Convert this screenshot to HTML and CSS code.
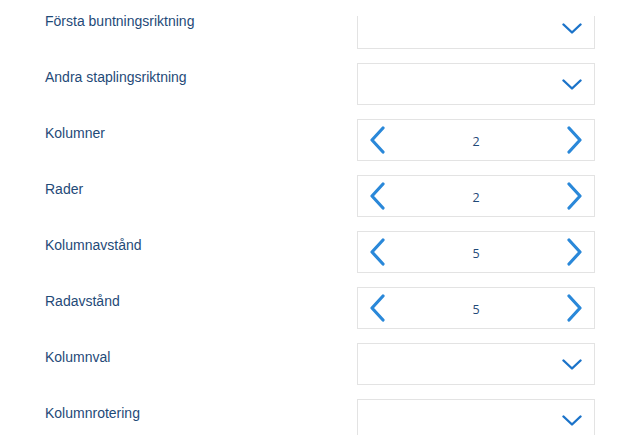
FILE: index.html
```html
<!DOCTYPE html>
<html lang="sv">
<head>
<meta charset="utf-8">
<link rel="stylesheet" href="styles.css">
</head>
<body>
<div class="form">
  <div class="row first">
    <div class="label">Första buntningsriktning</div>
    <div class="box select"><svg class="down" width="20" height="12" viewBox="0 0 20 12"><path d="M1.5 1.5 L10 9.5 L18.5 1.5" /></svg></div>
  </div>
  <div class="row">
    <div class="label">Andra staplingsriktning</div>
    <div class="box select"><svg class="down" width="20" height="12" viewBox="0 0 20 12"><path d="M1.5 1.5 L10 9.5 L18.5 1.5" /></svg></div>
  </div>
  <div class="row">
    <div class="label">Kolumner</div>
    <div class="box stepper">
      <svg class="nav" width="17" height="28" viewBox="0 0 17 28"><path d="M14 2 L3 14 L14 26" /></svg>
      <span class="val">2</span>
      <svg class="nav" width="17" height="28" viewBox="0 0 17 28"><path d="M3 2 L14 14 L3 26" /></svg>
    </div>
  </div>
  <div class="row">
    <div class="label">Rader</div>
    <div class="box stepper">
      <svg class="nav" width="17" height="28" viewBox="0 0 17 28"><path d="M14 2 L3 14 L14 26" /></svg>
      <span class="val">2</span>
      <svg class="nav" width="17" height="28" viewBox="0 0 17 28"><path d="M3 2 L14 14 L3 26" /></svg>
    </div>
  </div>
  <div class="row">
    <div class="label">Kolumnavstånd</div>
    <div class="box stepper">
      <svg class="nav" width="17" height="28" viewBox="0 0 17 28"><path d="M14 2 L3 14 L14 26" /></svg>
      <span class="val">5</span>
      <svg class="nav" width="17" height="28" viewBox="0 0 17 28"><path d="M3 2 L14 14 L3 26" /></svg>
    </div>
  </div>
  <div class="row">
    <div class="label">Radavstånd</div>
    <div class="box stepper">
      <svg class="nav" width="17" height="28" viewBox="0 0 17 28"><path d="M14 2 L3 14 L14 26" /></svg>
      <span class="val">5</span>
      <svg class="nav" width="17" height="28" viewBox="0 0 17 28"><path d="M3 2 L14 14 L3 26" /></svg>
    </div>
  </div>
  <div class="row">
    <div class="label">Kolumnval</div>
    <div class="box select"><svg class="down" width="20" height="12" viewBox="0 0 20 12"><path d="M1.5 1.5 L10 9.5 L18.5 1.5" /></svg></div>
  </div>
  <div class="row">
    <div class="label">Kolumnrotering</div>
    <div class="box select"><svg class="down" width="20" height="12" viewBox="0 0 20 12"><path d="M1.5 1.5 L10 9.5 L18.5 1.5" /></svg></div>
  </div>
</div>
</body>
</html>
```
FILE: styles.css
```css
html, body {
  margin: 0;
  padding: 0;
  background: #ffffff;
  overflow: hidden;
}
.form {
  display: flex;
  flex-direction: column;
  gap: 14px;
  padding: 7px 0 0 45px;
  font-family: "Liberation Sans", Arial, sans-serif;
}
.row {
  display: flex;
  align-items: flex-start;
  height: 42px;
}
.label {
  width: 312px;
  padding-top: 6px;
  font-size: 14px;
  color: #1f4a78;
  line-height: 16px;
}
.box {
  box-sizing: border-box;
  width: 238px;
  height: 42px;
  border: 1px solid #e3e3e3;
  background: #fff;
}
.first .box {
  clip-path: inset(9px 0 0 0);
}
.select {
  display: flex;
  align-items: flex-start;
  justify-content: flex-end;
  padding: 15px 12px 0 0;
}
.down path {
  fill: none;
  stroke: #1b73c9;
  stroke-width: 2.4;
  stroke-linecap: round;
  stroke-linejoin: round;
}
.stepper {
  display: flex;
  align-items: center;
  justify-content: space-between;
  padding: 0 11px 0 11px;
}
.nav path {
  fill: none;
  stroke: #2a88d9;
  stroke-width: 3.2;
  stroke-linecap: round;
  stroke-linejoin: round;
}
.val {
  font-family: "Open Sans", "Noto Sans", sans-serif;
  font-size: 12.5px;
  color: #1f4a78;
  padding-top: 2px;
}
```
